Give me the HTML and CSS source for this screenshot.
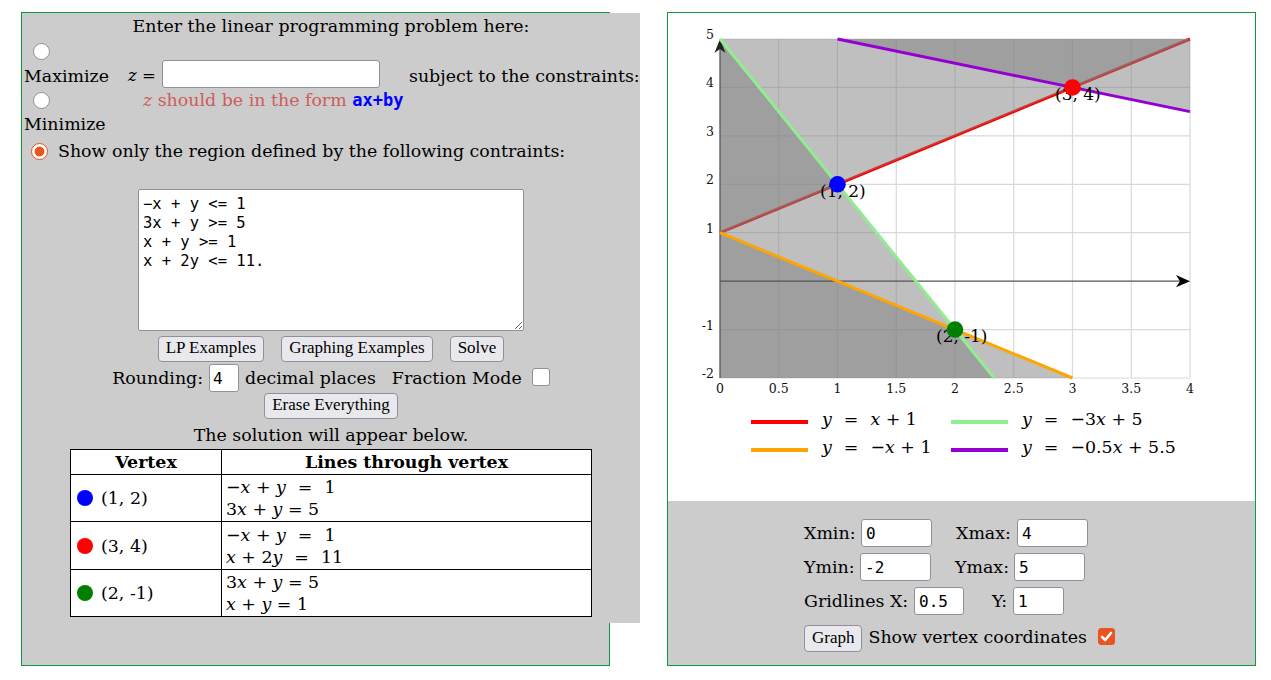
FILE: index.html
```html
<!DOCTYPE html>
<html lang="en">
<head>
<meta charset="utf-8">
<title>Linear Programming Grapher</title>
<link rel="stylesheet" href="styles.css">
</head>
<body>
<div class="page">
  <section class="panel panel-left">
    <div class="lp">
      <div class="title">Enter the linear programming problem here:</div>
      <div class="objective">
        <div class="mode-col">
          <input type="radio" name="mode" class="radio">
          <div class="mode-label">Maximize</div>
          <input type="radio" name="mode" class="radio radio-2">
          <div class="mode-label mode-label-2">Minimize</div>
        </div>
        <div class="z-col">
          <div class="z-row"><span class="z-eq"><i>z</i> =</span><input type="text" class="field z-field"></div>
          <div class="hint"><i>z</i> should be in the form <code>ax+by</code></div>
        </div>
        <div class="subject">subject to the constraints:</div>
      </div>
      <label class="region-row"><input type="radio" name="mode" class="radio" checked><span class="region-text">Show only the region defined by the following contraints:</span></label>
      <textarea class="constraints" spellcheck="false">−x + y &lt;= 1
3x + y &gt;= 5
x + y &gt;= 1
x + 2y &lt;= 11.</textarea>
      <div class="btn-row">
        <button class="btn">LP Examples</button>
        <button class="btn">Graphing Examples</button>
        <button class="btn">Solve</button>
      </div>
      <div class="round-row">
        <span>Rounding:</span>
        <input type="text" class="field round-field" value="4">
        <span class="dp">decimal places</span>
        <span class="fm">Fraction Mode</span>
        <span class="checkbox"></span>
      </div>
      <div class="erase-row"><button class="btn">Erase Everything</button></div>
      <div class="solution-note">The solution will appear below.</div>
      <table class="vertices">
        <thead>
          <tr><th class="c1">Vertex</th><th>Lines through vertex</th></tr>
        </thead>
        <tbody>
          <tr class="r1">
            <td><div class="vtx"><span class="dot dot-blue"></span>(1, 2)</div></td>
            <td><div class="eq">−<i>x</i> + <i>y</i><span class="rel">=</span>1</div><div class="eq">3<i>x</i> + <i>y</i> = 5</div></td>
          </tr>
          <tr class="r2">
            <td><div class="vtx"><span class="dot dot-red"></span>(3, 4)</div></td>
            <td><div class="eq">−<i>x</i> + <i>y</i><span class="rel">=</span>1</div><div class="eq"><i>x</i> + 2<i>y</i><span class="rel">=</span>11</div></td>
          </tr>
          <tr class="r3">
            <td><div class="vtx"><span class="dot dot-green"></span>(2, -1)</div></td>
            <td><div class="eq">3<i>x</i> + <i>y</i> = 5</div><div class="eq"><i>x</i> + <i>y</i> = 1</div></td>
          </tr>
        </tbody>
      </table>
    </div>
  </section>

  <section class="panel panel-right">
    <div class="graph-area">
      <svg class="plot" width="587" height="395" viewBox="0 0 587 395">
        <g class="grid" stroke="#d9d9d9" stroke-width="1.2">
          <line x1="52" y1="26" x2="52" y2="365"/>
          <line x1="110.75" y1="26" x2="110.75" y2="365"/>
          <line x1="169.5" y1="26" x2="169.5" y2="365"/>
          <line x1="228.25" y1="26" x2="228.25" y2="365"/>
          <line x1="287" y1="26" x2="287" y2="365"/>
          <line x1="345.75" y1="26" x2="345.75" y2="365"/>
          <line x1="404.5" y1="26" x2="404.5" y2="365"/>
          <line x1="463.25" y1="26" x2="463.25" y2="365"/>
          <line x1="522" y1="26" x2="522" y2="365"/>
          <line x1="52" y1="26" x2="522" y2="26"/>
          <line x1="52" y1="74.43" x2="522" y2="74.43"/>
          <line x1="52" y1="122.86" x2="522" y2="122.86"/>
          <line x1="52" y1="171.29" x2="522" y2="171.29"/>
          <line x1="52" y1="219.71" x2="522" y2="219.71"/>
          <line x1="52" y1="316.57" x2="522" y2="316.57"/>
          <line x1="52" y1="365" x2="522" y2="365"/>
        </g>
        <line x1="52" y1="219.71" x2="522" y2="26" stroke="#ff0000" stroke-width="3"/>
        <g fill="rgba(128,128,128,0.5)">
          <polygon points="52,219.71 522,26 52,26"/>
          <polygon points="52,26 326.17,365 52,365"/>
          <polygon points="52,219.71 404.5,365 52,365"/>
          <polygon points="169.5,26 522,98.64 522,26"/>
        </g>
        <line x1="52" y1="365" x2="52" y2="30" stroke="#555" stroke-width="1.2"/>
        <polygon points="52,26 46.5,40 52,36 57.5,40" fill="#222"/>
        <line x1="52" y1="268.14" x2="518" y2="268.14" stroke="#555" stroke-width="1.2"/>
        <polygon points="522,268.14 508,262 512,268.14 508,274.3" fill="#000"/>
        <line x1="52" y1="26" x2="326.17" y2="365" stroke="#90ee90" stroke-width="3"/>
        <line x1="52" y1="219.71" x2="404.5" y2="365" stroke="#ffa500" stroke-width="3"/>
        <line x1="169.5" y1="26" x2="522" y2="98.64" stroke="#9400d3" stroke-width="3"/>
        <g class="tick" text-anchor="end">
          <text x="46" y="26">5</text>
          <text x="46" y="74.4">4</text>
          <text x="46" y="122.9">3</text>
          <text x="46" y="171.3">2</text>
          <text x="46" y="219.7">1</text>
          <text x="46" y="316.6">-1</text>
          <text x="46" y="365">-2</text>
        </g>
        <g class="tick" text-anchor="middle">
          <text x="52" y="380">0</text>
          <text x="110.75" y="380">0.5</text>
          <text x="169.5" y="380">1</text>
          <text x="228.25" y="380">1.5</text>
          <text x="287" y="380">2</text>
          <text x="345.75" y="380">2.5</text>
          <text x="404.5" y="380">3</text>
          <text x="463.25" y="380">3.5</text>
          <text x="522" y="380">4</text>
        </g>
        <g class="vlabel">
          <text x="152" y="183.5">(1, 2)</text>
          <text x="387" y="86.5">(3, 4)</text>
          <text x="268" y="328.5">(2, -1)</text>
        </g>
        <circle cx="169.5" cy="171.29" r="8.3" fill="#0000ff"/>
        <circle cx="404.5" cy="74.43" r="8.3" fill="#ff0000"/>
        <circle cx="287" cy="316.57" r="8.3" fill="#008000"/>
      </svg>
      <div class="legend">
        <div class="legend-item"><span class="swatch sw-red"></span><span class="math"><i>y</i><span class="rel-l">=</span><i>x</i> + 1</span></div>
        <div class="legend-item"><span class="swatch sw-green"></span><span class="math"><i>y</i><span class="rel-l">=</span>−3<i>x</i> + 5</span></div>
        <div class="legend-item"><span class="swatch sw-orange"></span><span class="math"><i>y</i><span class="rel-l">=</span>−<i>x</i> + 1</span></div>
        <div class="legend-item"><span class="swatch sw-purple"></span><span class="math"><i>y</i><span class="rel-l">=</span>−0.5<i>x</i> + 5.5</span></div>
      </div>
    </div>
    <div class="controls">
      <div class="ctrl-row">
        <span class="lbl w-xmin">Xmin:</span><input type="text" class="field wide" value="0">
        <span class="lbl gap24 w-xmax">Xmax:</span><input type="text" class="field wide" value="4">
      </div>
      <div class="ctrl-row">
        <span class="lbl w-ymin">Ymin:</span><input type="text" class="field wide" value="-2">
        <span class="lbl gap24 w-ymax">Ymax:</span><input type="text" class="field wide" value="5">
      </div>
      <div class="ctrl-row">
        <span class="lbl w-gx">Gridlines X:</span><input type="text" class="field narrow" value="0.5">
        <span class="lbl gap28 w-gy">Y:</span><input type="text" class="field narrow2" value="1">
      </div>
      <div class="ctrl-row graph-row">
        <button class="btn">Graph</button>
        <span class="show-text">Show vertex coordinates</span>
        <span class="checkbox is-checked"><svg width="17" height="17" viewBox="0 0 17 17"><polyline points="4,8.8 7.2,12 13,5" fill="none" stroke="#fff" stroke-width="2.6" stroke-linecap="round" stroke-linejoin="round"/></svg></span>
      </div>
    </div>
  </section>
</div>
</body>
</html>
```

FILE: styles.css
```css
html, body {
  margin: 0;
  background: #fff;
}

body {
  font-family: "DejaVu Serif", serif;
  font-size: 17.4px;
  line-height: 20px;
  color: #000;
}

.page {
  display: flex;
  align-items: flex-start;
  gap: 57px;
  padding: 12px 0 0 21px;
}

.panel {
  width: 587px;
  height: 652px;
  border: 1px solid #0b9a3c;
  background: #ccc;
}

/* ---------- left panel ---------- */

.lp {
  width: 618px;
  background: #ccc;
  padding: 3px 0 6px;
  display: flex;
  flex-direction: column;
}

.title {
  text-align: center;
  line-height: 20px;
}

.objective {
  display: flex;
  align-items: flex-start;
}

.mode-col {
  width: 104px;
  padding-left: 2px;
  display: flex;
  flex-direction: column;
  align-items: flex-start;
}

.radio {
  appearance: none;
  -webkit-appearance: none;
  width: 17px;
  height: 17px;
  margin: 7px 0 0 9px;
  border: 1px solid #8f8f9d;
  border-radius: 50%;
  background: #fff;
  box-sizing: border-box;
  display: block;
  flex: none;
}

.radio-2 {
  margin-top: 6px;
}

.radio:checked {
  border: 1.5px solid #e95420;
  background: radial-gradient(circle at center, #e95420 0 4.6px, #fff 5.2px);
}

.mode-label {
  margin-top: 6px;
}

.mode-label-2 {
  margin-top: 5px;
}

.z-col {
  width: 252px;
  flex: none;
}

.z-row {
  display: flex;
  align-items: flex-start;
  margin-top: 24px;
  height: 28px;
}

.z-eq {
  width: 34px;
  margin-top: 6px;
  font-size: 16.5px;
}

.field {
  box-sizing: border-box;
  height: 28px;
  border: 1px solid #8f8f9d;
  border-radius: 3px;
  background: #fff;
  font-family: "DejaVu Sans Mono", monospace;
  font-size: 16px;
  padding: 0 4px;
  margin: 0;
  color: #000;
}

.z-field {
  width: 218px;
}

.hint {
  margin: 2px 0 0 15px;
  white-space: nowrap;
  color: #cd5c5c;
}

.hint code {
  font-family: "DejaVu Sans Mono", monospace;
  font-weight: bold;
  font-size: 17px;
  color: #0000ff;
}

.subject {
  margin: 30px 0 0 29px;
  white-space: nowrap;
}

.region-row {
  display: flex;
  align-items: center;
  height: 20px;
  margin-top: 7px;
}

.region-row .radio {
  margin: 0 0 0 9px;
}

.region-text {
  margin-left: 10px;
}

.constraints {
  display: block;
  box-sizing: border-box;
  width: 386px;
  height: 142px;
  margin: 28px auto 0;
  padding: 5px 4px 4px;
  border: 1px solid #8f8f9d;
  border-radius: 2px;
  background: #fff;
  font-family: "DejaVu Sans Mono", monospace;
  font-size: 15.5px;
  line-height: 19px;
  color: #000;
  resize: both;
}

.btn {
  box-sizing: border-box;
  height: 26px;
  padding: 0 7px 2px;
  border: 1px solid #8f8f9d;
  border-radius: 4px;
  background: #e9e9ed;
  font-family: "Liberation Serif", "Times New Roman", serif;
  font-size: 17px;
  line-height: 22px;
  color: #000;
}

.btn-row {
  display: flex;
  justify-content: center;
  gap: 17px;
  margin-top: 5px;
}

.round-row {
  display: flex;
  justify-content: center;
  align-items: center;
  height: 28px;
  margin-top: 2px;
}

.round-field {
  width: 30px;
  margin: 0 6px;
  padding: 0 3px;
}

.fm {
  margin-left: 16px;
}

.checkbox {
  box-sizing: border-box;
  width: 18px;
  height: 18px;
  border: 1px solid #8f8f9d;
  border-radius: 3px;
  background: #fff;
  display: block;
  flex: none;
}

.round-row .checkbox {
  margin-left: 10px;
  margin-bottom: 2px;
}

.checkbox.is-checked {
  background: #e95420;
  border-color: #e95420;
  width: 17px;
  height: 17px;
}

.checkbox svg {
  display: block;
  margin: -1px;
}

.erase-row {
  display: flex;
  justify-content: center;
  margin-top: 1px;
}

.solution-note {
  text-align: center;
  margin-top: 6px;
}

.vertices {
  border-collapse: collapse;
  width: 522px;
  margin: 4px auto 0;
  background: #fff;
}

.vertices th,
.vertices td {
  border: 1px solid #000;
  padding: 0 4px;
}

.vertices th {
  height: 24px;
  font-weight: bold;
  text-align: center;
}

.vertices th.c1 {
  width: 142px;
}

.vertices tr.r1 td { height: 46px; }
.vertices tr.r2 td { height: 47px; }
.vertices tr.r3 td { height: 46px; }

.vtx {
  display: flex;
  align-items: center;
  gap: 8px;
  padding-left: 2px;
}

.dot {
  width: 16px;
  height: 16px;
  border-radius: 50%;
  flex: none;
}

.dot-blue { background: #0000ff; }
.dot-red { background: #ff0000; }
.dot-green { background: #008000; }

.eq {
  line-height: 22px;
  white-space: nowrap;
}

.rel {
  margin: 0 12px;
}

/* ---------- right panel ---------- */

.graph-area {
  height: 488px;
  background: #fff;
}

.plot {
  display: block;
}

.tick {
  font-family: "DejaVu Serif", serif;
  font-size: 12.5px;
  fill: #111;
}

.vlabel {
  font-family: "DejaVu Serif", serif;
  font-size: 17px;
  fill: #000;
}

.legend {
  display: grid;
  grid-template-columns: 200px 200px;
  grid-auto-rows: 28px;
  margin-left: 83px;
}

.legend-item {
  display: flex;
  align-items: center;
}

.swatch {
  width: 57px;
  height: 4px;
  margin-right: 14px;
  flex: none;
}

.sw-red { background: #ff0000; }
.sw-green { background: #90ee90; }
.sw-orange { background: #ffa500; }
.sw-purple { background: #9400d3; }

.legend .math {
  margin-bottom: 7px;
  white-space: nowrap;
}

.rel-l {
  margin: 0 12px;
}

.controls {
  height: 164px;
  box-sizing: border-box;
  padding: 18px 0 0 136px;
  background: #ccc;
}

.ctrl-row {
  display: flex;
  align-items: center;
  height: 28px;
  margin-bottom: 6px;
}

.lbl {
  white-space: nowrap;
}

.w-xmin { width: 57px; }
.w-xmax { width: 61px; }
.w-ymin { width: 56px; }
.w-ymax { width: 59px; }
.w-gx { width: 110px; }
.w-gy { width: 21px; }

.gap24 { margin-left: 24px; }
.gap28 { margin-left: 28px; }

.wide { width: 71px; }
.narrow { width: 50px; }
.narrow2 { width: 51px; }

.graph-row {
  margin-top: 10px;
  height: 27px;
}

.graph-row .btn {
  height: 27px;
}

.show-text {
  margin-left: 6px;
  padding-bottom: 3px;
}

.graph-row .checkbox {
  margin-left: 11px;
  margin-bottom: 4px;
}
```
